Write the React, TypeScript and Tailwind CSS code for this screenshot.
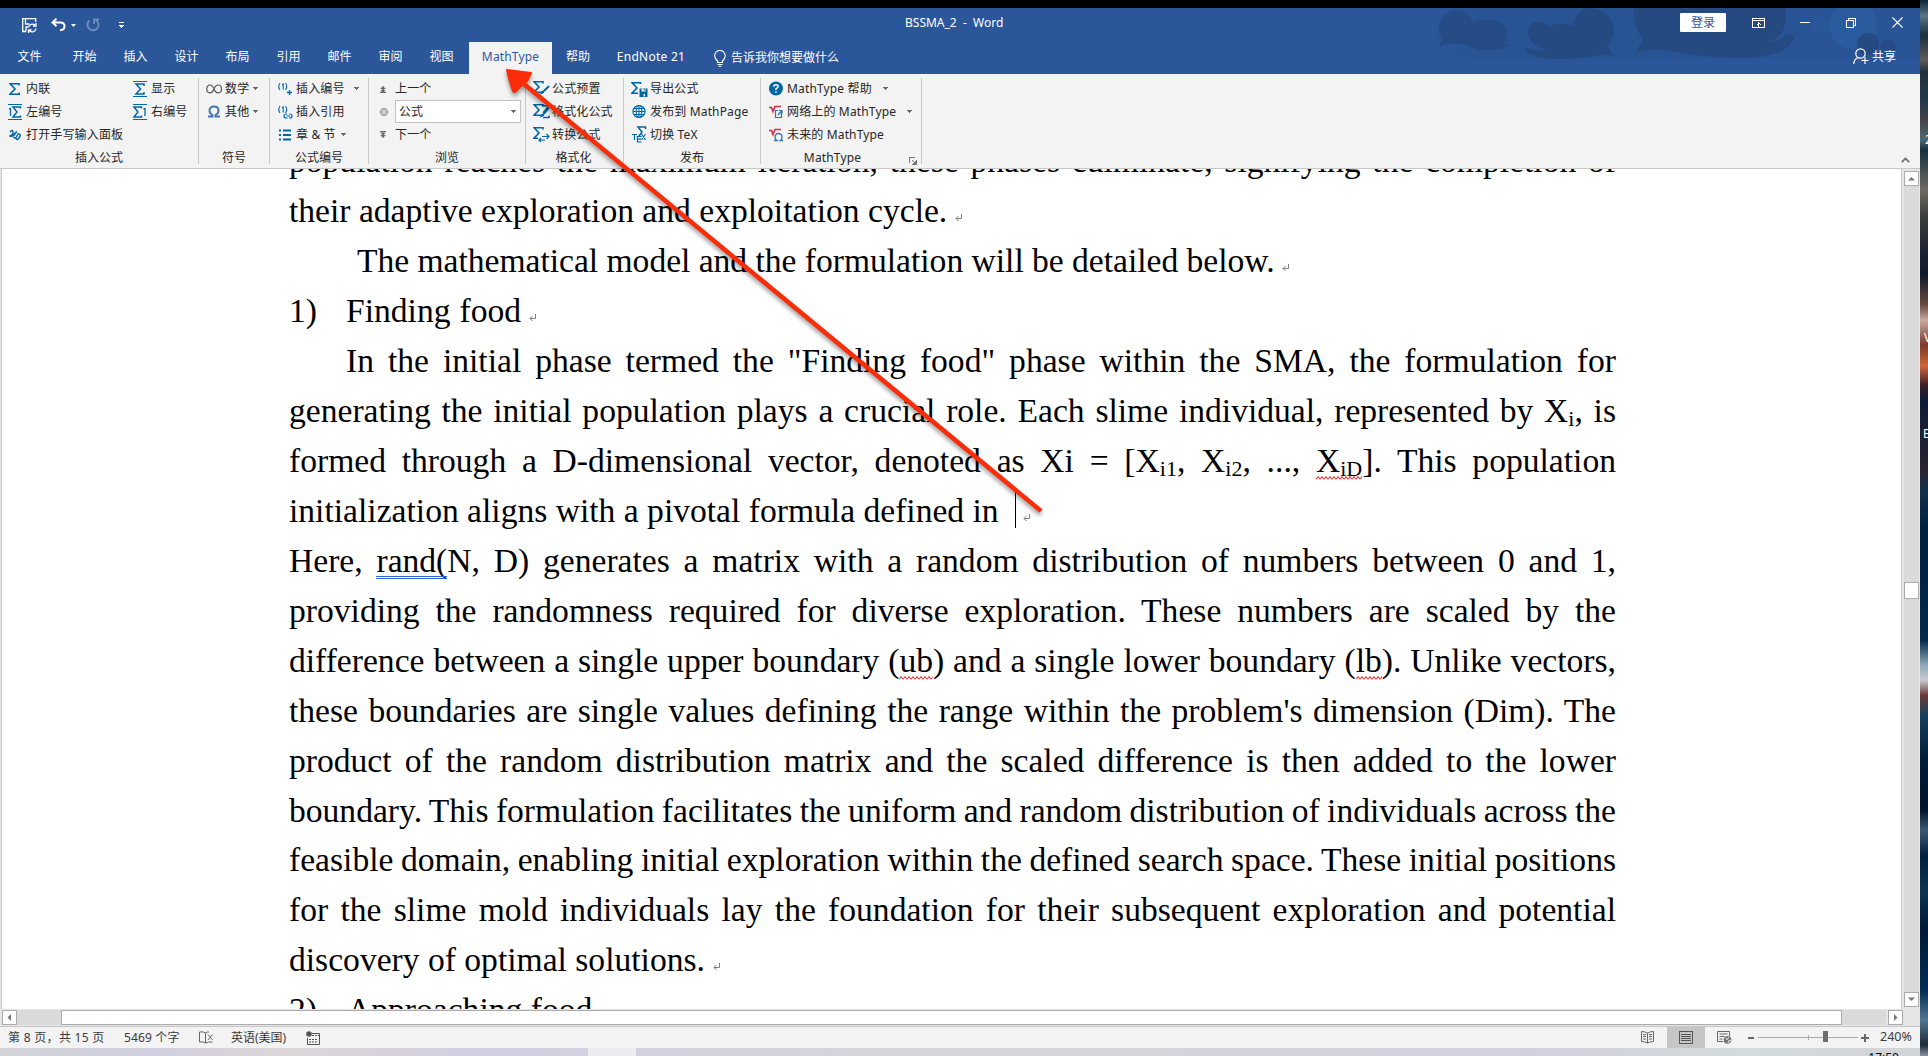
import React from "react";

const UI = "font-['Noto_Sans','Noto_Sans_CJK_SC',sans-serif]";

function Caret({ className = "" }: { className?: string }) {
  return (
    <svg width="5" height="3" viewBox="0 0 5 3" className={`shrink-0 ${className}`} shapeRendering="crispEdges">
      <path d="M0 0h5v1H4v1H3v1H2V2H1V1H0z" fill="#6a6a6a" />
    </svg>
  );
}

function Icon({ w = 16, children }: { w?: number; children: React.ReactNode }) {
  return (
    <svg width={w} height="18" viewBox={`0 0 ${w} 18`} fill="none" className="block shrink-0">
      {children}
    </svg>
  );
}

const BLUE = "#0067a5";
const SIG = "M10 5.5V3.8H1.2L6 9l-5 5.2h9.2v-1.8";

function Sigma({ dx = 0, s = 1, dy = 0 }: { dx?: number; s?: number; dy?: number }) {
  return <path d={SIG} transform={`translate(${dx} ${dy}) scale(${s})`} stroke={BLUE} strokeWidth={1.6} />;
}

function Cmd({
  icon,
  slot,
  label,
  caret,
}: {
  icon: React.ReactNode;
  slot: string;
  label: string;
  caret?: string;
}) {
  return (
    <div className="flex h-[23px] shrink-0 items-center whitespace-nowrap">
      <div className={`flex shrink-0 items-center ${slot}`}>{icon}</div>
      <span className="tracking-[0.150px]">{label}</span>
      {caret && <Caret className={caret} />}
    </div>
  );
}

function Group({
  width,
  label,
  labelPad = "",
  launcher,
  children,
}: {
  width: string;
  label: string;
  labelPad?: string;
  launcher?: React.ReactNode;
  children: React.ReactNode;
}) {
  return (
    <div className={`flex shrink-0 pt-[3px] ${width}`}>
      <div className="flex min-w-0 flex-1 flex-col">
        {children}
        <div className={`flex h-[23px] shrink-0 items-center justify-center pt-px ${labelPad}`}>
          {label}
          {launcher}
        </div>
      </div>
      <div className="mt-px h-[86px] w-px shrink-0 bg-[#c8c8c8]" />
    </div>
  );
}

const SigBar = ({ one }: { one?: "l" | "r" }) => (
  <Icon>
    <path d="M1 1.5h14M1 16.5h14" stroke={BLUE} />
    {one === "l" ? (
      <>
        <path d="M13.5 5.5V4H6l4 5-4 5h7.5v-1.5" stroke={BLUE} strokeWidth="1.5" />
        <path d="M2 6.2l1.5-.7V13" stroke={BLUE} strokeWidth="1.3" />
      </>
    ) : one === "r" ? (
      <>
        <path d="M9.5 5.5V4H2l4 5-4 5h7.5v-1.5" stroke={BLUE} strokeWidth="1.5" />
        <path d="M11.5 6.2l1.5-.7V13" stroke={BLUE} strokeWidth="1.3" />
      </>
    ) : (
      <path d="M12 6V4H4l4.500 5L4 14h8v-2" stroke={BLUE} strokeWidth="1.5" />
    )}
  </Icon>
);

const Paren = ({ children }: { children: React.ReactNode }) => (
  <Icon>
    <path d="M3 3Q.5 6.500 3 10M8.500 3q2.500 3.500 0 7M5 4.700l1.200-.700V9.500" stroke={BLUE} strokeWidth="1.100" />
    {children}
  </Icon>
);

function Ribbon() {
  return (
    <div className="flex h-[95px] shrink-0 border-b border-[#c8c8c8] bg-[#f3f3f3] text-[12px] leading-none text-[#262626]">
      <Group width="w-[199px]" label="插入公式">
        <div className="flex">
          <div className="w-[125px]">
            <Cmd slot="w-[26px] pl-[9px]" label="内联" icon={<Icon><Sigma /></Icon>} />
            <Cmd slot="w-[26px] pl-[7px]" label="左编号" icon={<SigBar one="l" />} />
          </div>
          <div>
            <Cmd slot="w-[26px] pl-[7px]" label="显示" icon={<SigBar />} />
            <Cmd slot="w-[26px] pl-[7px]" label="右编号" icon={<SigBar one="r" />} />
          </div>
        </div>
        <Cmd
          slot="w-[26px] pl-[9px]"
          label="打开手写输入面板"
          icon={
            <Icon>
              <path d="M1 6q2.500-3 3 0t-3 4q3 1 4.500-1.500T8 5.500M4.500 11q1.500 2.500 3.500-1 1-3 2.500-2t-.500 4-3 0" stroke={BLUE} strokeWidth="1.500" />
            </Icon>
          }
        />
      </Group>

      <Group width="w-[71px]" label="符号">
        <Cmd
          slot="w-[26px] pl-[7px]"
          label="数学"
          caret="ml-[4px]"
          icon={
            <Icon w={17}>
              <path d="M8 9C7 6.500 5.800 5 4 5 2 5 .8 6.600.8 9S2 12.800 4 12.800 7 11.500 8 9s2.200-4 4.200-4 3.300 1.700 3.300 4-1.400 3.800-3.300 3.800S9 11.500 8 9z" stroke="#555" strokeWidth="1.200" />
            </Icon>
          }
        />
        <Cmd
          slot="w-[26px] pl-[8px]"
          label="其他"
          caret="ml-[4px]"
          icon={
            <Icon>
              <path d="M1 13.500h4.500v-1.500C3.500 11 2.500 9.500 2.500 7.500 2.500 5 4.300 3.500 7 3.500s4.500 1.500 4.500 4c0 2-1 3.500-3 4.500v1.500H13" stroke="#4472b4" strokeWidth="1.900" />
            </Icon>
          }
        />
        <div className="h-[23px] shrink-0" />
      </Group>

      <Group width="w-[99px]" label="公式编号">
        <Cmd slot="w-[26px] pl-[7px]" label="插入编号" caret="ml-[9px]" icon={<Paren><path d="M10 12.500h5M12.500 10v5" stroke={BLUE} strokeWidth="1.300" /></Paren>} />
        <Cmd
          slot="w-[26px] pl-[7px]"
          label="插入引用"
          icon={
            <Paren>
              <path d="M10 11H9a2 2 0 000 4h1.500M12.500 11h.500a2 2 0 010 4h-1M9.500 13h3.500" stroke={BLUE} strokeWidth="1.200" />
            </Paren>
          }
        />
        <Cmd
          slot="w-[26px] pl-[8px]"
          label="章 & 节"
          caret="ml-[5px]"
          icon={
            <Icon>
              <path d="M1 4.500h2M1 9h2M1 13.500h2M5 4.500h8M5 9h8M5 13.500h8" stroke={BLUE} strokeWidth="1.800" />
            </Icon>
          }
        />
      </Group>

      <Group width="w-[157px]" label="浏览">
        <Cmd slot="w-[26px] pl-[11px]" label="上一个" icon={<Icon w={7}><path d="M3 6L5.800 9H.2zM3 8.500l2.800 3H.2zM2 11h2v1H2zM0 12h6v1H0z" fill="#666" /></Icon>} />
        <div className="flex h-[23px] shrink-0 items-center">
          <div className="w-[26px] pl-[11px]">
            <div className="size-[8px] rounded-full border border-[#888] bg-[#ccc]" />
          </div>
          <div className="flex h-[23px] w-[126px] items-center justify-between border border-[#c1c1c1] bg-white pr-[4px] pl-[3px]">
            <span>公式</span>
            <Caret />
          </div>
        </div>
        <Cmd slot="w-[26px] pl-[11px]" label="下一个" icon={<Icon w={7}><path d="M0 5h6v1H0zM2 6h2v1H2zM3 9.500L5.800 6.500H.2zM3 12L5.800 9H.2z" fill="#666" /></Icon>} />
      </Group>

      <Group width="w-[98px]" label="格式化" labelPad="pr-[2px]">
        <Cmd slot="w-[26px] pl-[7px]" label="公式预置" icon={<Icon w={17}><Sigma dy={-2} /><path d="M16 6l-5 5" stroke={BLUE} strokeWidth="2" /><path d="M11.500 10.500q-1 4-5 4 1.500-1 2-3z" fill={BLUE} /></Icon>} />
        <Cmd slot="w-[26px] pl-[7px]" label="格式化公式" icon={<Icon w={17}><Sigma dy={-2} /><path d="M9 2.800h7l-6 7M10 14.500h6v-2M16 5l-5 6" stroke={BLUE} strokeWidth="1.600" /><path d="M11.500 10.500q-1 4-5 4 1.500-1 2-3z" fill={BLUE} /></Icon>} />
        <Cmd slot="w-[26px] pl-[7px]" label="转换公式" icon={<Icon w={17}><path d="M10 3.500V1.800H1.200L6 7l-5 5.200h4" stroke={BLUE} strokeWidth="1.600" /><path d="M9 10.500h7M13.500 8l2.500 2.500-2.500 2.500M12 14H6M8 12l-2 2 2 2" stroke={BLUE} strokeWidth="1.200" /></Icon>} />
      </Group>

      <Group width="w-[137px]" label="发布">
        <Cmd slot="w-[26px] pl-[7px]" label="导出公式" icon={<Icon w={17}><path d="M9.500 4V2.800H1.200L6 8l-5 5.200h6" stroke={BLUE} strokeWidth="1.600" /><path d="M8.500 8.500h8V17h-8z" fill={BLUE} /><path d="M10.500 8.500h4v3h-4zM12.500 14h1.500v2.500h-1.500z" fill="#f3f3f3" /><path d="M12.700 8.500h1v2h-1z" fill={BLUE} /></Icon>} />
        <Cmd
          slot="w-[26px] pl-[8px]"
          label="发布到 MathPage"
          icon={
            <Icon>
              <circle cx="7" cy="8.500" r="6" stroke={BLUE} strokeWidth="1.200" />
              <ellipse cx="7" cy="8.500" rx="2.800" ry="6" stroke={BLUE} strokeWidth="1.100" />
              <path d="M1 8.500h12M7 2.500v12M2 5.500h10M2 11.500h10" stroke={BLUE} />
            </Icon>
          }
        />
        <Cmd slot="w-[26px] pl-[8px]" label="切换 TeX" icon={<Icon w={17}><path d="M13.500 3V1H6l4 5-3 4" stroke={BLUE} strokeWidth="1.500" /><path d="M0 8.500h5M2.500 8.500V14M9.500 10.500h-4V16h4M5.500 13.200h3.500M9.500 8l4 6M13.500 8l-4 6" stroke={BLUE} strokeWidth="1.200" /></Icon>} />
      </Group>

      <Group
        width="w-[161px]"
        label="MathType"
        labelPad="pl-[39px] tracking-[0.150px]"
        launcher={
          <svg width="8" height="8" viewBox="0 0 8 8" className="mt-[5px] ml-[48px] shrink-0" shapeRendering="crispEdges">
            <path d="M.5 6V.5H6M3 3l3 3M7 3v4H3M6 4v2H4" stroke="#777" fill="none" />
          </svg>
        }
      >
        <Cmd
          slot="w-[26px] pl-[8px]"
          label="MathType 帮助"
          caret="ml-[11px]"
          icon={
            <Icon>
              <circle cx="7" cy="8.500" r="7" fill={BLUE} />
              <path d="M4.800 6.700Q4.800 4.700 7 4.700t2.200 1.900Q9.200 7.800 7 8.800v1.200M7 11.200v1.600" stroke="#fff" strokeWidth="1.500" />
            </Icon>
          }
        />
        <Cmd
          slot="w-[26px] pl-[8px]"
          label="网络上的 MathType"
          caret="ml-[11px]"
          icon={
            <Icon>
              <path d="M0 4.500h2.500L4 8.500 6 3.500h6" stroke="#d6294b" strokeWidth="1.700" />
              <path d="M12.500 10v4.500h-6V7.500H9M9 12l3.500-4M10 7.500h3v3" stroke="#2777b0" strokeWidth="1.200" />
            </Icon>
          }
        />
        <Cmd
          slot="w-[26px] pl-[8px]"
          label="未来的 MathType"
          icon={
            <Icon>
              <path d="M0 4.500h2.500L4 8.500 6 3.500h6" stroke="#d6294b" strokeWidth="1.700" />
              <path d="M5 14.500h3q-2-1.200-2-3.500a3.500 3.500 0 017 0q0 2.300-1.500 3.500H14" stroke="#2777b0" strokeWidth="1.300" />
            </Icon>
          }
        />
      </Group>

      <div className="flex flex-1 items-end justify-end pr-[10px] pb-[5px]">
        <svg width="9" height="6" viewBox="0 0 9 6">
          <path d="M.8 5.200L4.500 1.500l3.700 3.700" stroke="#6d6d6d" strokeWidth="1.700" fill="none" />
        </svg>
      </div>
    </div>
  );
}

function TitleArt() {
  return (
    <svg width="500" height="51" viewBox="0 0 500 51" className="absolute top-0 right-0">
      <defs>
        <linearGradient id="haze" x1="0" x2="1" y1="0" y2="0">
          <stop offset="0" stopColor="#254f8f" stopOpacity="0" />
          <stop offset=".15" stopColor="#254f8f" stopOpacity=".45" />
          <stop offset=".7" stopColor="#254f8f" stopOpacity=".5" />
          <stop offset="1" stopColor="#254f8f" stopOpacity=".35" />
        </linearGradient>
      </defs>
      <rect width="500" height="51" fill="url(#haze)" />
      <circle cx="433" cy="17" r="24" fill="#2c5a9f" />
      <circle cx="400" cy="17" r="9" fill="#2c5a9f" opacity=".6" />
      <g fill="#264c88">
        <path d="M19 39Q23 32 20 27Q17 20 21 12Q27 2 37 2q11 0 16 12 6-4 11-1 6-3 11-1 13 4 12 16-1 6-3 8 4-1 6 0-6 6-16 6H58Q42 34 28 36q-6 1-9 3z" />
      </g>
      <g fill="#254a82">
        <path d="M104 38q8 6 24 4-20-4-20-18 2-12 12-10 6 2 10 5 10-7 22-1Q158 0 170 0q20 2 24 20 0 12-8 18 4 2 7 10-8-2-14-1-20 4-42 4-30 0-33-13z" />
        <path d="M214 0h152v14q-4 18-22 21 16-1 22-8 8-1 8 2-2 8-12 14-20 8-50 7-50-3-66-8-22-2-31 4l8-15q-10-12-9-31z" />
        <circle cx="448" cy="36" r="11" />
        <circle cx="468" cy="39" r="8" opacity=".6" />
      </g>
    </svg>
  );
}

const TABS = ["开始", "插入", "设计", "布局", "引用", "邮件", "审阅", "视图"];

function Header() {
  return (
    <div className="relative h-[66px] shrink-0 bg-[#2b579a] text-[12px] leading-none text-white">
      <TitleArt />
      <div className="relative flex h-[34px] items-center">
        <div className="flex w-[905px] items-center pl-[22px]">
          <svg width="15" height="15" viewBox="0 0 15 15" fill="none" stroke="#fff" strokeWidth="1.300" className="mt-px">
            <path d="M4 13.500H.7V.7h13V4M3.500 1v5h4M4 13.500V9h2" />
            <path d="M6.500 9.500A4 4 0 0113 7M14 5v3h-3M14 10.500A4 4 0 017.500 13M6.500 15v-3h3" />
          </svg>
          <svg width="15" height="14" viewBox="0 0 15 14" fill="none" stroke="#fff" strokeWidth="2" className="ml-[14px]">
            <path d="M5.500.8L1.500 4.500l4 3.800M2 4.500h7.500q4 0 4 3.800t-4.500 4" />
          </svg>
          <svg width="5" height="3" viewBox="0 0 5 3" className="ml-[5px]"><path d="M0 0h5L2.500 3z" fill="#fff" /></svg>
          <svg width="14" height="14" viewBox="0 0 14 14" fill="none" stroke="#6d8cbc" strokeWidth="1.900" className="ml-[10px]">
            <path d="M3.500 2.500A5.500 5.500 0 1010 2.200M8 6V1.500h5" />
          </svg>
          <svg width="5" height="6" viewBox="0 0 5 6" className="ml-[19px]" shapeRendering="crispEdges"><path d="M0 0h5v1H0zM0 3h5v1H4v1H3v1H2V5H1V4H0z" fill="#fff" /></svg>
        </div>
        <span className="mt-[-4px] whitespace-pre">BSSMA_2  -  Word</span>
        <div className="mt-[-5px] ml-auto flex items-center">
          <div className="flex h-[19px] w-[46px] items-center justify-center rounded-[1px] bg-white text-[#2b579a]">登录</div>
          <svg width="13" height="10" viewBox="0 0 13 10" fill="none" stroke="#fff" className="ml-[26px]" shapeRendering="crispEdges">
            <path d="M.5.5h12v9H.5zM.5 2.500h12M6.500 9V4M4.500 6.500h1M7.500 6.500h1M5.500 5.500h2" />
          </svg>
          <div className="ml-[35px] h-px w-[10px] bg-white" />
          <svg width="10" height="10" viewBox="0 0 10 10" fill="none" stroke="#fff" className="ml-[36px]" shapeRendering="crispEdges">
            <path d="M.5 2.500h7v7h-7zM2.500 2.500v-2h7v7h-2" />
          </svg>
          <svg width="11" height="11" viewBox="0 0 11 11" stroke="#fff" strokeWidth="1.100" className="mr-[17px] ml-[36px]">
            <path d="M.5.5l10 10M10.500.5l-10 10" />
          </svg>
        </div>
      </div>
      <div className="relative flex h-[32px] items-stretch">
        <div className="flex w-[59px] items-center justify-center pb-[2px]">文件</div>
        {TABS.map((t) => (
          <div key={t} className="flex w-[51px] items-center justify-center pb-[2px]">{t}</div>
        ))}
        <div className="ml-[2px] flex w-[83px] items-center justify-center bg-[#f3f3f3] pb-[2px] tracking-[0.150px] text-[#2b579a]">MathType</div>
        <div className="flex w-[52px] items-center justify-center pb-[2px]">帮助</div>
        <div className="flex w-[94px] items-center justify-center pb-[2px] tracking-[0.250px]">EndNote 21</div>
        <div className="flex items-center pl-[16px]">
          <svg width="12" height="17" viewBox="0 0 12 17" fill="none" stroke="#fff" strokeWidth="1.100">
            <path d="M3.500 12.500V11Q.6 8.500.6 5.800A5.300 5.300 0 0111.300 5.800Q11.300 8.500 8.500 11v1.500zM3.500 14.500h5M4.500 16.300h3" />
          </svg>
          <span className="ml-[5px]">告诉我你想要做什么</span>
        </div>
        <div className="mt-[-3px] ml-auto flex items-center pr-[24px]">
          <svg width="16" height="17" viewBox="0 0 16 17" fill="none" stroke="#fff" strokeWidth="1.200">
            <circle cx="7.500" cy="5.500" r="4.700" />
            <path d="M.8 16q.2-5 4-6M8.500 12.500h7M12 9v7" />
          </svg>
          <span className="ml-[3px]">共享</span>
        </div>
      </div>
    </div>
  );
}

function Mark({ className }: { className: string }) {
  return (
    <svg width="7" height="8" viewBox="0 0 7 8" fill="none" stroke="#808080" className={`inline-block shrink-0 ${className}`}>
      <path d="M6.500 0v4.500H1M3.500 2L1 4.500 3.500 7" />
    </svg>
  );
}

const Sub = ({ children }: { children: React.ReactNode }) => (
  <span className="relative top-[4px] text-[22px] leading-none">{children}</span>
);

const Squiggle = ({ children }: { children: React.ReactNode }) => (
  <span className="relative inline-block">
    {children}
    <svg className="absolute bottom-[6px] left-0 h-[4px] w-full">
      <defs>
        <pattern id="wave" width="4" height="4" patternUnits="userSpaceOnUse">
          <path d="M0 3.500L2 .5l2 3" stroke="#f01818" strokeWidth="1" fill="none" />
        </pattern>
      </defs>
      <rect width="100%" height="4" fill="url(#wave)" />
    </svg>
  </span>
);

function Line({ w = "w-[1327px]", indent = "", mark, children }: { w?: string; indent?: string; mark?: string; children: React.ReactNode }) {
  return (
    <div className={`flex h-[49.940px] shrink-0 items-center ${indent}`}>
      <div className={`shrink-0 whitespace-nowrap [text-align-last:justify] ${w}`}>{children}</div>
      {mark && <Mark className={mark} />}
    </div>
  );
}

function Doc() {
  return (
    <div className="flex h-[840px] flex-1 flex-col overflow-hidden border-l border-[#c6c6c6] bg-white pl-[287px] font-['Liberation_Serif',serif] text-[33.600px] leading-[50px] text-black">
      <div className="-mt-[32.700px] flex flex-col">
        <Line>population reaches the maximum iteration, these phases culminate, signifying the completion of</Line>
        <Line w="w-[657px]" mark="mt-[14px] ml-[9px]">their adaptive exploration and exploitation cycle.</Line>
        <Line w="w-[916px] tracking-[-0.020px]" indent="pl-[68px]" mark="mt-[14px] ml-[9px]">The mathematical model and the formulation will be detailed below.</Line>
        <div className="flex">
          <span className="w-[57px]">1)</span>
          <Line w="w-[175px]" mark="mt-[14px] ml-[8px]">Finding food</Line>
        </div>
        <Line w="w-[1270px]" indent="pl-[57px]">In the initial phase termed the "Finding food" phase within the SMA, the formulation for</Line>
        <Line>generating the initial population plays a crucial role. Each slime individual, represented by X<Sub>i</Sub>, is</Line>
        <Line>
          formed through a D-dimensional vector, denoted as Xi = [X<Sub>i1</Sub>, X<Sub>i2</Sub>, ..., <Squiggle>X<Sub>iD</Sub></Squiggle>]. This population
        </Line>
        <div className="flex">
          <Line w="w-[709px]">initialization aligns with a pivotal formula defined in</Line>
          <div className="mt-[4px] ml-[17px] h-[38px] w-px bg-black" />
          <Mark className="mt-[28px] ml-[7px]" />
        </div>
        <Line>
          Here, <span className="relative inline-block">rand(<span className="absolute bottom-[7px] left-0 h-[3px] w-full border-y border-[#2f66cf]" /></span>N, D) generates a matrix with a random distribution of numbers between 0 and 1,
        </Line>
        <Line>providing the randomness required for diverse exploration. These numbers are scaled by the</Line>
        <Line>
          difference between a single upper boundary (<Squiggle>ub</Squiggle>) and a single lower boundary (<Squiggle>lb</Squiggle>). Unlike vectors,
        </Line>
        <Line>these boundaries are single values defining the range within the problem's dimension (Dim). The</Line>
        <Line>product of the random distribution matrix and the scaled difference is then added to the lower</Line>
        <Line w="w-[1327px] [word-spacing:-2px]">boundary. This formulation facilitates the uniform and random distribution of individuals across the</Line>
        <Line w="w-[1327px] [word-spacing:-2px]">feasible domain, enabling initial exploration within the defined search space. These initial positions</Line>
        <Line>for the slime mold individuals lay the foundation for their subsequent exploration and potential</Line>
        <Line w="w-[415px]" mark="mt-[14px] ml-[9px]">discovery of optimal solutions.</Line>
        <div className="flex">
          <span className="w-[58px]">2)</span>
          <Line w="w-[244px]">Approaching food</Line>
        </div>
      </div>
    </div>
  );
}

function ArrowBtn({ d }: { d: string }) {
  return (
    <div className="flex size-[15px] shrink-0 items-center justify-center border border-[#ababab] bg-white">
      <svg width="7" height="7" viewBox="0 0 7 7"><path d={d} fill="#777" /></svg>
    </div>
  );
}

function StatusBar() {
  return (
    <div className="flex h-[22px] shrink-0 items-center border-t border-[#c6c6c6] bg-[#f3f3f3] text-[12px] leading-none whitespace-nowrap text-[#3b3b3b]">
      <span className="w-[116px] pl-[8px] tracking-[0.300px]">第 8 页，共 15 页</span>
      <span className="w-[83px] pl-[8px] tracking-[0.150px]">5469 个字</span>
      <svg width="15" height="13" viewBox="0 0 15 13" fill="none" stroke="#666">
        <path d="M6.500 2Q4 .2.500 1v10q3.500-.800 6 1zM6.500 2Q8.500.5 10 1M6.500 12q2-1.500 7-1M9 3.500l4.500 5.500M13.500 3.500L9 9" />
      </svg>
      <span className="w-[92px] pl-[17px]">英语(美国)</span>
      <svg width="14" height="14" viewBox="0 0 14 14" fill="none" stroke="#555">
        <circle cx="3" cy="3" r="2.800" fill="#555" stroke="none" />
        <path d="M6 2.500h7.500v11H1.500V7" /><path d="M6 4.500h7M3 8.500h9M3 11h9" strokeDasharray="2 1" />
      </svg>
      <div className="ml-auto flex h-full items-center">
        <svg width="13" height="13" viewBox="0 0 13 13" fill="none" stroke="#666">
          <path d="M6.500 2Q4 .5.500.5v10q3.500 0 6 1.500 2.500-1.500 6-1.500V.5Q9 .5 6.500 2zV12M2 3.500h3M2 5.500h3M2 8h3M8 3.500h3M8 5.500h3M8 8h3" />
        </svg>
        <div className="ml-[13px] flex h-full w-[38px] items-center justify-center bg-[#c6c6c6]">
          <svg width="14" height="13" viewBox="0 0 14 13" fill="none" stroke="#555" shapeRendering="crispEdges">
            <path d="M.5.5h13v12H.5zM2 3.500h10M2 5.500h10M2 7.500h10M2 9.500h10" />
          </svg>
        </div>
        <svg width="15" height="13" viewBox="0 0 15 13" fill="none" stroke="#666" className="ml-[12px]">
          <path d="M12.500 5V.5H.5v10H6M2.500 3h8M2.500 5.500h5M2.500 8h3" />
          <circle cx="10.500" cy="8.800" r="3.900" fill="#777" stroke="none" />
          <path d="M8.500 7l2 1.500 1-2M11 12l1-2.500 2 .500" stroke="#f3f3f3" />
        </svg>
        <div className="ml-[16px] h-[2px] w-[6px] bg-[#666]" />
        <div className="relative ml-[4px] h-px w-[100px] bg-[#ababab]">
          <div className="absolute top-[-2px] left-[50px] h-[5px] w-px bg-[#ababab]" />
          <div className="absolute top-[-6px] left-[65px] h-[11px] w-[5px] bg-[#6d6d6d]" />
        </div>
        <svg width="8" height="8" viewBox="0 0 8 8" className="ml-[3px]"><path d="M3 0h2v3h3v2H5v3H3V5H0V3h3z" fill="#666" /></svg>
        <span className="ml-[11px] w-[40px] text-[12.500px]">240%</span>
      </div>
    </div>
  );
}

const WALL =
  "bg-[linear-gradient(180deg,#0b2438_0px,#5c7484_16px,#1c3040_35px,#5d5c5a_60px,#23303a_72px,#223a4c_100px,#444248_120px,#4a6a74_140px,#163040_150px,#6d6a62_190px,#3c3f3c_215px,#1a1f30_255px,#101a2c_275px,#6a4a40_305px,#c9a9a0_320px,#7a3b2a_345px,#d0653c_366px,#3a2028_385px,#0c1c36_400px,#2a2230_470px,#14314c_490px,#001f40_530px,#03294c_640px,#8fa7b8_665px,#c9cbd0_680px,#6c3a3a_695px,#17405c_715px,#001c38_760px,#00122a_810px,#3c5874_830px,#02203f_855px,#0b3350_890px,#001a38_930px,#012c54_990px,#4f7590_1020px,#1f2c38_1045px,#8793a0_1056px)]";

export default function App() {
  return (
    <div className={`relative flex h-[1056px] w-[1928px] overflow-hidden ${UI}`}>
      <div className="flex w-[1920px] flex-col">
        <div className="h-[8px] shrink-0 bg-black" />
        <Header />
        <Ribbon />
        <div className="flex h-[840px] shrink-0 bg-[#e6e6e6] pl-px">
          <Doc />
          <div className="flex w-[19px] shrink-0 flex-col items-center border-l border-[#c6c6c6] pt-[2px] pr-px pb-[2px] pl-[2px]">
            <ArrowBtn d="M3.500 2L7 5.500H0z" />
            <div className="w-[15px] flex-1 bg-[#dadada] pt-[396px]">
              <div className="h-[17px] border border-[#ababab] bg-white" />
            </div>
            <ArrowBtn d="M0 1.500h7L3.500 5z" />
          </div>
        </div>
        <div className="flex h-[17px] shrink-0 items-center bg-[#e6e6e6] pl-[2px]">
          <ArrowBtn d="M5 0v7L1.500 3.500z" />
          <div className="flex h-[15px] w-[1869px] bg-[#dadada] pl-[44px]">
            <div className="h-[15px] w-[1781px] border border-[#ababab] bg-white" />
          </div>
          <div className="ml-[2px]"><ArrowBtn d="M2 0v7l3.500-3.500z" /></div>
        </div>
        <StatusBar />
        <div className="flex h-[8px] overflow-hidden bg-[linear-gradient(90deg,#d2d2d8,#d0cfdf_8%,#dcd6d8_15%,#d0cfe0_25%,#d5d6da_50%,#d2d0de_80%,#d3dbdb_91%,#d2d3d6)]">
          <div className="ml-[588px] h-full w-[48px] bg-[#ececee]" />
          <span className="ml-auto pt-[3px] pr-[21px] text-[12px] leading-[14px] text-black">17:50</span>
        </div>
      </div>
      <div className={`w-[8px] overflow-hidden text-[12px] leading-none text-white ${WALL}`}>
        <div className="pt-[134px] pl-[5px]">2</div>
        <div className="pt-[186px] pl-[4px]">V</div>
        <div className="pt-[84px] pl-[3px]">B</div>
      </div>

      <svg width="1928" height="1056" viewBox="0 0 1928 1056" className="pointer-events-none absolute inset-0 drop-shadow-[0_3px_2px_rgba(0,0,0,0.4)]">
        <path d="M507 70l24 3-4 8-4 3-8 8-2-1-3-9z" fill="#fb2c08" stroke="#fb2c08" strokeWidth="2" strokeLinejoin="round" />
        <path d="M518 79L1041 511" stroke="#fb2c08" strokeWidth="4.500" />
      </svg>
    </div>
  );
}
